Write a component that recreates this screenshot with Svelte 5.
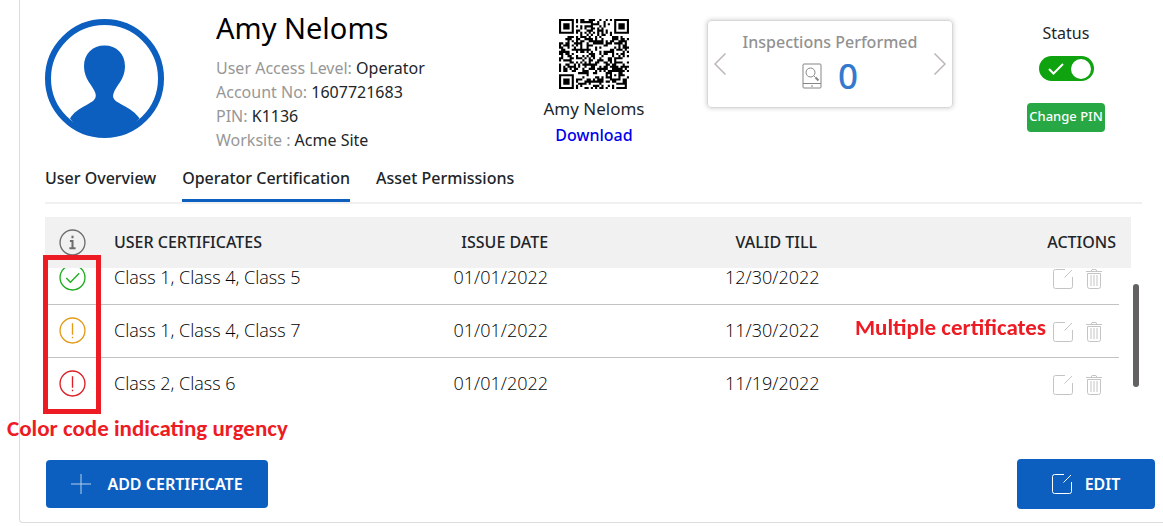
<script>
  import { onMount } from 'svelte';

  const details = [
    ['User Access Level:', 'Operator'],
    ['Account No:', '1607721683'],
    ['PIN:', 'K1136'],
    ['Worksite :', 'Acme Site']
  ];
  const tabs = ['User Overview', 'Operator Certification', 'Asset Permissions'];
  const rows = [
    { state: 'ok', name: 'Class 1, Class 4, Class 5', issued: '01/01/2022', till: '12/30/2022' },
    { state: 'warn', name: 'Class 1, Class 4, Class 7', issued: '01/01/2022', till: '11/30/2022' },
    { state: 'late', name: 'Class 2, Class 6', issued: '01/01/2022', till: '11/19/2022' }
  ];

  let active = $state(1);
  let enabled = $state(true);
  let scroller;

  onMount(() => {
    scroller.scrollTop = 16;
  });

  const SIZE = 33;
  function ring(x, y, cx, cy) {
    return Math.max(Math.abs(x - cx), Math.abs(y - cy));
  }
  function buildCode() {
    let d = '';
    let seed = 1607721683;
    for (let y = 0; y < SIZE; y++) {
      for (let x = 0; x < SIZE; x++) {
        seed = (Math.imul(seed, 1103515245) + 12345) & 0x7fffffff;
        let on = ((seed >> 16) & 1) === 1;
        if (x === 6 || y === 6) on = (x + y) % 2 === 0;
        const a = ring(x, y, 26, 26);
        if (a <= 2) on = a !== 1;
        for (const [cx, cy] of [[3, 3], [29, 3], [3, 29]]) {
          const r = ring(x, y, cx, cy);
          if (r <= 4) on = r !== 2 && r !== 4;
        }
        if (on) d += `M${x} ${y}h1v1h-1z`;
      }
    }
    return d;
  }
  const code = buildCode();
</script>

{#snippet pencil()}
  <svg class="pencil" viewBox="0 0 20 20" aria-hidden="true">
    <path d="M12 .5H2.500a2 2 0 0 0-2 2v15a2 2 0 0 0 2 2h15a2 2 0 0 0 2-2V8M11.500 8.500 19 1" />
  </svg>
{/snippet}

<main class="card">
  <header class="profile">
    <svg class="avatar" viewBox="0 0 119 119" role="img" aria-label="Profile">
      <circle cx="59.500" cy="59.500" r="56.500" fill="#fff" stroke="#0d5fbf" stroke-width="6" />
      <path fill="#0d5fbf" d="M59.500 26.500c-12 0-20.500 8-20.500 21 0 13 9 19 11.500 27 1.500 6-3 8-9 11.500C34 90 28 94 25 99.500 34 112 47 117.500 59.500 117.500S85 112 94.500 99.500C91 94 85 90 77.500 86c-6-3.500-11-5.500-9-11.500C71 66.500 80 60.500 80 47.500c0-13-8.500-21-20.500-21z" />
    </svg>

    <div class="info">
      <h1>Amy Neloms</h1>
      <dl>
        {#each details as [label, value]}
          <div><dt>{label}</dt> <dd>{value}</dd></div>
        {/each}
      </dl>
    </div>

    <div class="qr">
      <svg viewBox="0 0 33 33" role="img" aria-label="QR code"><path d={code} /></svg>
      <span>Amy Neloms</span>
      <a href="#download">Download</a>
    </div>

    <section class="stat">
      <button type="button" aria-label="Previous">
        <svg viewBox="0 0 12 22"><path d="M11.500 .5 1 11l10.500 10.500" /></svg>
      </button>
      <div class="stat-body">
        <h2>Inspections Performed</h2>
        <div class="count">
          <svg viewBox="0 0 20 26" aria-hidden="true">
            <rect x="1" y="1" width="18" height="24" rx="1" />
            <path d="M1 20.500h18M9 23h2" />
            <circle cx="8.500" cy="9.500" r="4.500" />
            <path d="m12 13 1.500 1.500" />
            <path d="m13.500 14.500 3 3" stroke-width="2" />
          </svg>
          <strong>0</strong>
        </div>
      </div>
      <button type="button" aria-label="Next">
        <svg viewBox="0 0 12 22"><path d="M.5 .5 11 11 .5 21.500" /></svg>
      </button>
    </section>

    <div class="status">
      <label for="status">Status</label>
      <span class="switch">
        <input id="status" type="checkbox" role="switch" bind:checked={enabled} />
        <svg viewBox="0 0 16 12" aria-hidden="true"><path d="m1 6 4.500 4.500L15 1" /></svg>
      </span>
      <button type="button">Change PIN</button>
    </div>
  </header>

  <nav>
    {#each tabs as tab, i}
      <button type="button" class:active={active === i} onclick={() => (active = i)}>{tab}</button>
    {/each}
  </nav>

  <div class="certs">
    <div class="scroller" bind:this={scroller}>
      <table>
        <thead>
          <tr>
            <th class="icon">
              <svg class="badge info-badge" viewBox="0 0 26 26" role="img" aria-label="Info">
                <circle cx="13" cy="13" r="12" />
                <path d="M13 6.500v2.500M10.500 11.500H13V18M10 18.500h6" stroke-width="2" />
              </svg>
            </th>
            <th class="name">USER CERTIFICATES</th>
            <th class="date">ISSUE DATE</th>
            <th class="date">VALID TILL</th>
            <th class="actions">ACTIONS</th>
            <th class="edge"></th>
          </tr>
        </thead>
        <tbody>
          {#each rows as row}
            <tr>
              <td class="icon">
                <svg class="badge {row.state}" viewBox="0 0 26 26" role="img" aria-label={row.state}>
                  <circle cx="13" cy="13" r="12" />
                  {#if row.state === 'ok'}
                    <path d="m7 13.500 4 4L19.500 9" />
                  {:else}
                    <path d="M13 6v11M13 19v1.500" />
                  {/if}
                </svg>
              </td>
              <td class="name">{row.name}</td>
              <td class="date">{row.issued}</td>
              <td class="date">{row.till}</td>
              <td class="actions">
                <div class="tools">
                  <button type="button" aria-label="Edit certificate">{@render pencil()}</button>
                  <button type="button" aria-label="Delete certificate">
                    <svg class="bin" viewBox="0 0 16 20" aria-hidden="true">
                      <path d="M0 2.500h16M5 2.500l1-2h4l1 2M1.500 4.500v13a2 2 0 0 0 2 2h9a2 2 0 0 0 2-2v-13zM5 6v11M8 6v11M11 6v11" />
                    </svg>
                  </button>
                </div>
              </td>
              <td class="edge"></td>
            </tr>
          {/each}
        </tbody>
      </table>
    </div>
    <div class="thumb"></div>
    <div class="frame"></div>
    <p class="note many">Multiple certificates</p>
    <p class="note urgency">Color code indicating urgency</p>
  </div>

  <footer>
    <button type="button" class="add">
      <svg viewBox="0 0 20 20" aria-hidden="true"><path d="M10 0v20M0 10h20" /></svg>
      ADD CERTIFICATE
    </button>
    <button type="button" class="edit">{@render pencil()} EDIT</button>
  </footer>
</main>

<style>
  :global(body) { background: #fff; }
  * { box-sizing: border-box; }
  h1, h2, dl, dd, p { margin: 0; font-weight: 400; }
  svg { display: block; fill: none; stroke: currentColor; }
  button { font: inherit; color: inherit; border: 0; background: none; padding: 0; cursor: pointer; }

  .card {
    margin-left: 19px;
    padding: 0 0 13px 25px;
    border: solid #dcdcdc;
    border-width: 0 0 1px 1px;
    border-bottom-left-radius: 4px;
    color: #212529;
    font-family: "Noto Sans", "Open Sans", sans-serif;
    font-size: 16px;
  }

  .profile {
    display: grid;
    grid-template-columns: 135px 1fr 154px 246px 154px;
    column-gap: 36px;
    margin-right: 20px;
    height: 157px;
    align-items: start;
  }
  .avatar { width: 119px; height: 119px; margin-top: 19px; stroke: none; }

  h1 { font-size: 29px; line-height: 40px; margin-top: 8px; color: #000; white-space: nowrap; }
  dl { margin-top: 8px; font-size: 16px; line-height: 24px; white-space: nowrap; }
  dt, dd { display: inline; }
  dt { color: #979797; }

  .qr { display: flex; flex-direction: column; align-items: center; padding-top: 19px; font-size: 17px; line-height: 26px; }
  .qr svg { width: 70px; height: 70px; margin-bottom: 7px; fill: #000; stroke: none; }
  .qr a { color: #0000ee; font-size: 16px; font-weight: 500; text-decoration: none; }

  .stat {
    display: flex;
    justify-content: space-between;
    align-items: center;
    height: 88px;
    margin-top: 20px;
    padding: 0 6px;
    border: 1px solid #d8d8d8;
    border-radius: 4px;
    box-shadow: 0 0 5px #ccc;
    color: #bdb5b7;
  }
  .stat > button svg { width: 12px; height: 22px; stroke-width: 1.500; }
  .stat-body { text-align: center; }
  h2 { font-size: 16px; line-height: 24px; font-weight: 500; color: #929292; white-space: nowrap; }
  .count { display: flex; justify-content: center; align-items: center; gap: 16px; }
  .count svg { width: 20px; height: 26px; color: #858585; }
  .count strong { color: #3579cf; font-size: 35px; line-height: 44px; font-weight: 500; }

  .status { display: flex; flex-direction: column; align-items: center; padding-top: 21px; }
  .status label { font-size: 16px; line-height: 24px; }
  .switch { position: relative; margin-top: 11px; height: 25px; }
  .switch input {
    appearance: none;
    display: flex;
    align-items: center;
    justify-content: flex-start;
    width: 55px;
    height: 25px;
    margin: 0;
    padding: 0 3px;
    border-radius: 13px;
    background: #999;
  }
  .switch input:checked { justify-content: flex-end; background: #0fa30f; }
  .switch input::before { content: ""; width: 20px; height: 20px; border-radius: 50%; background: #fff; }
  .switch svg { position: absolute; left: 9px; top: 7px; width: 16px; height: 12px; color: #fff; stroke-width: 2; pointer-events: none; }
  .status button { margin-top: 22px; height: 29px; width: 78px; padding-bottom: 3px; border-radius: 4px; background: #28a745; color: #fff; font-size: 13px; font-weight: 500; white-space: nowrap; }

  nav { display: flex; gap: 26px; margin-right: 21px; height: 47px; border-bottom: 2px solid #f0f0f0; }
  nav button { font-size: 16px; font-weight: 500; white-space: nowrap; border-bottom: 3px solid transparent; }
  nav button.active { border-color: #0d5fbf; }

  .certs { position: relative; margin: 13px 32px 0 0; }
  .scroller { height: 194px; overflow-y: auto; scrollbar-width: none; }
  table { width: 100%; border-spacing: 0; table-layout: fixed; font-size: 18px; }
  th { position: sticky; top: 0; z-index: 1; height: 51px; padding: 0 0 2px; background: #f1f1f1; font-size: 16px; font-weight: 500; text-align: left; white-space: nowrap; }
  td { height: 53px; padding: 0 0 2px; border-bottom: 1px solid #c3c3c3; white-space: nowrap; }
  td.name, td.date { font-family: "Open Sans", "Noto Sans", sans-serif; font-weight: 300; color: #000; }
  tbody tr:last-child td, td.edge { border-color: transparent; }
  .icon { width: 69px; padding: 0 0 0 14px; }
  td.icon { padding-bottom: 2px; }
  th.date, td.date { width: 25%; text-align: center; }
  td.date { padding-right: 8px; }
  .actions { width: 207px; }
  th.actions { text-align: right; padding-right: 3px; }
  .edge { width: 12px; }
  .badge { width: 27px; height: 27px; stroke-width: 1.300; }
  .info-badge { color: #6d6d6d; }
  .ok { color: #1fad1f; }
  .warn { color: #e39b18; }
  .late { color: #dc1f26; }
  .tools { display: flex; justify-content: flex-end; gap: 13px; padding: 4px 17px 0 0; color: #c4c4c4; }
  .pencil { width: 20px; height: 20px; }
  .bin { width: 16px; height: 20px; }

  .thumb { position: absolute; right: -8px; top: 67px; width: 6px; height: 103px; border-radius: 3px; background: #646162; }
  .frame { position: absolute; z-index: 2; left: -2px; top: 38px; width: 58px; height: 159px; border: 5px solid #ed1c24; }
  .note { position: absolute; z-index: 2; color: #ed1c24; font: 700 23px/26px Carlito, Lato, sans-serif; white-space: nowrap; }
  .many { right: 85px; top: 97px; }
  .urgency { left: -38px; top: 198px; }

  footer { display: flex; justify-content: space-between; align-items: center; margin: 48px 8px 0 1px; }
  footer button { display: flex; align-items: center; justify-content: center; border-radius: 4px; background: #0d5fbf; color: #fff; font-size: 16px; font-weight: 600; }
  .add { width: 222px; height: 48px; gap: 16px; }
  .add svg { width: 20px; height: 20px; opacity: .7; }
  .edit { width: 138px; height: 50px; gap: 13px; }
</style>
